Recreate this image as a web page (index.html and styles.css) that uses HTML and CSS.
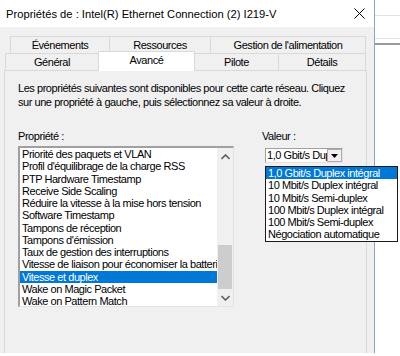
FILE: index.html
```html
<!DOCTYPE html>
<html lang="fr">
<head>
    <meta charset="utf8"/>
    <title>Propriétés de : Intel(R) Ethernet Connection (2) I219-V</title>
    <link rel="stylesheet" href="styles.css">
</head>
<body>
<div class="screen">
    <div class="window">
        <div class="titlebar">
            <span class="title">Propriétés de : Intel(R) Ethernet Connection (2) I219-V</span>
            <svg class="close" width="11" height="11" viewBox="0 0 11 11">
                <path d="M0.5 0.5 L10.5 10.5 M10.5 0.5 L0.5 10.5" stroke="#000" stroke-width="1" fill="none"/>
            </svg>
        </div>

        <div class="tabs">
            <div class="tabrow back">
                <div class="tab t-events">Événements</div>
                <div class="tab t-res">Ressources</div>
                <div class="tab t-power">Gestion de l'alimentation</div>
            </div>
            <div class="tabrow front">
                <div class="tab t-general">Général</div>
                <div class="tab t-adv active">Avancé</div>
                <div class="tab t-driver">Pilote</div>
                <div class="tab t-details">Détails</div>
            </div>
        </div>

        <div class="panel">
            <p class="intro">Les propriétés suivantes sont disponibles pour cette carte réseau. Cliquez<br>sur une propriété à gauche, puis sélectionnez sa valeur à droite.</p>

            <div class="fields">
                <div class="col-prop">
                    <div class="label">Propriété :</div>
                    <div class="listbox">
                        <ul class="items">
                            <li>Priorité des paquets et VLAN</li>
                            <li>Profil d'équilibrage de la charge RSS</li>
                            <li>PTP Hardware Timestamp</li>
                            <li>Receive Side Scaling</li>
                            <li>Réduire la vitesse à la mise hors tension</li>
                            <li>Software Timestamp</li>
                            <li>Tampons de réception</li>
                            <li>Tampons d'émission</li>
                            <li>Taux de gestion des interruptions</li>
                            <li>Vitesse de liaison pour économiser la batterie</li>
                            <li class="selected">Vitesse et duplex</li>
                            <li>Wake on Magic Packet</li>
                            <li>Wake on Pattern Match</li>
                        </ul>
                        <div class="scrollbar">
                            <div class="arrow">
                                <svg width="9" height="6" viewBox="0 0 9 6"><path d="M0.5 5 L4.5 1 L8.5 5" stroke="#606060" stroke-width="1.6" fill="none"/></svg>
                            </div>
                            <div class="track"><div class="thumb"></div></div>
                            <div class="arrow">
                                <svg width="9" height="6" viewBox="0 0 9 6"><path d="M0.5 1 L4.5 5 L8.5 1" stroke="#606060" stroke-width="1.6" fill="none"/></svg>
                            </div>
                        </div>
                    </div>
                </div>

                <div class="col-value">
                    <div class="label">Valeur :</div>
                    <div class="combo">
                        <span class="combo-text">1,0 Gbit/s Duplex intégral</span>
                        <span class="combo-btn">
                            <svg width="7" height="4" viewBox="0 0 7 4"><path d="M0 0 H7 L3.5 4 Z" fill="#000"/></svg>
                        </span>
                        <ul class="dropdown">
                            <li class="selected">1,0 Gbit/s Duplex intégral</li>
                            <li>10 Mbit/s Duplex intégral</li>
                            <li>10 Mbit/s Semi-duplex</li>
                            <li>100 Mbit/s Duplex intégral</li>
                            <li>100 Mbit/s Semi-duplex</li>
                            <li>Négociation automatique</li>
                        </ul>
                    </div>
                </div>
            </div>
        </div>
    </div>

    <div class="backdrop">
        <div class="rule rule-a"></div>
        <div class="rule rule-b"></div>
        <div class="rule rule-c"></div>
    </div>
</div>
</body>
</html>
```

FILE: styles.css
```css
body {
    margin: 0;
    background: #fff;
    font-family: "Liberation Sans", Arial, sans-serif;
    font-size: 11px;
    letter-spacing: -0.45px;
    color: #000;
}

.screen {
    display: flex;
    width: 400px;
    height: 356px;
    overflow: hidden;
}

.window {
    width: 374px;
    height: 353px;
    flex-shrink: 0;
    background: #f0f0f0;
    border-right: 1px solid #8fa4c4;
    display: flex;
    flex-direction: column;
}

.titlebar {
    height: 27px;
    flex-shrink: 0;
    background: #fff;
    display: flex;
    align-items: center;
    justify-content: space-between;
    padding: 0 9px 0 6px;
}

.title {
    font-size: 11.2px;
    letter-spacing: 0;
    color: #000;
}

.close {
    display: block;
}

/* tabs */

.tabs {
    margin-top: 9px;
    padding-left: 5px;
}

.tabrow {
    display: flex;
    align-items: flex-start;
    height: 17px;
}

.tabrow.back {
    padding-left: 5px;
}

.tab {
    box-sizing: border-box;
    height: 17px;
    border: 1px solid #d9d9d9;
    border-bottom: none;
    margin-right: -1px;
    text-align: center;
    line-height: 16px;
    white-space: nowrap;
}

.tab.active {
    position: relative;
    z-index: 1;
    height: 20px;
    margin-top: -2px;
    background: #fff;
}

.t-events { width: 100px; }
.t-res { width: 102px; }
.t-power { width: 156px; }
.t-general { width: 94px; }
.t-adv { width: 97px; }
.t-driver { width: 85px; }
.t-details { width: 88px; }

/* page */

.panel {
    flex: 1;
    margin: 0 7px 0 4px;
    border: 1px solid #d9d9d9;
    border-bottom: none;
    padding: 11px 13px 0 13px;
}

.intro {
    margin: 0;
    line-height: 13.5px;
    white-space: nowrap;
}

.fields {
    display: flex;
    margin-top: 21px;
}

.label {
    line-height: 13px;
    height: 13px;
}

.col-prop {
    width: 216px;
}

.col-value {
    margin-left: 28px;
}

.listbox {
    box-sizing: border-box;
    display: flex;
    height: 161px;
    margin-top: 3px;
    background: #fff;
    border-top: 2px solid #a0a0a0;
    border-left: 2px solid #a0a0a0;
    border-right: 1px solid #e3e3e3;
    border-bottom: 1px solid #e3e3e3;
    overflow: hidden;
}

.items {
    flex: 1;
    min-width: 0;
    list-style: none;
    margin: 0;
    padding: 0;
}

.items li,
.dropdown li {
    height: 12.25px;
    line-height: 12.25px;
    padding-left: 2px;
    white-space: nowrap;
    overflow: hidden;
}

.selected {
    background: #0078d7;
    color: #fff;
}

.scrollbar {
    width: 16px;
    flex-shrink: 0;
    display: flex;
    flex-direction: column;
    background: #f0f0f0;
}

.arrow {
    height: 17px;
    display: flex;
    align-items: center;
    justify-content: center;
}

.arrow svg {
    display: block;
}

.track {
    flex: 1;
    display: flex;
    flex-direction: column;
    justify-content: flex-end;
}

.thumb {
    height: 44px;
    margin: 0 1px;
    background: #cdcdcd;
}

/* combo */

.combo {
    position: relative;
    box-sizing: border-box;
    display: flex;
    width: 78px;
    height: 15px;
    margin: 5px 0 0 3px;
    background: #fff;
    border-top: 1px solid #a0a0a0;
    border-left: 1px solid #a0a0a0;
    border-right: 1px solid #e3e3e3;
    border-bottom: 1px solid #e3e3e3;
}

.combo-text {
    flex: 1;
    min-width: 0;
    overflow: hidden;
    white-space: nowrap;
    line-height: 13px;
    padding-left: 1px;
}

.combo-btn {
    box-sizing: border-box;
    width: 15px;
    background: #f0f0f0;
    border: 1px solid #adadad;
    display: flex;
    align-items: center;
    justify-content: center;
}

.dropdown {
    position: absolute;
    top: 17px;
    left: -1px;
    width: 131px;
    margin: 0;
    padding: 0;
    list-style: none;
    background: #fff;
    border: 1px solid #1a1a1a;
    z-index: 2;
}

/* desktop behind the dialog */

.backdrop {
    flex: 1;
}

.rule {
    height: 1px;
    background: #e3e3e3;
}

.rule-a { margin-top: 15px; }
.rule-b { margin-top: 22px; }
.rule-c {
    margin-top: 4px;
    height: 2px;
    background: #9a9a9a;
}
```
